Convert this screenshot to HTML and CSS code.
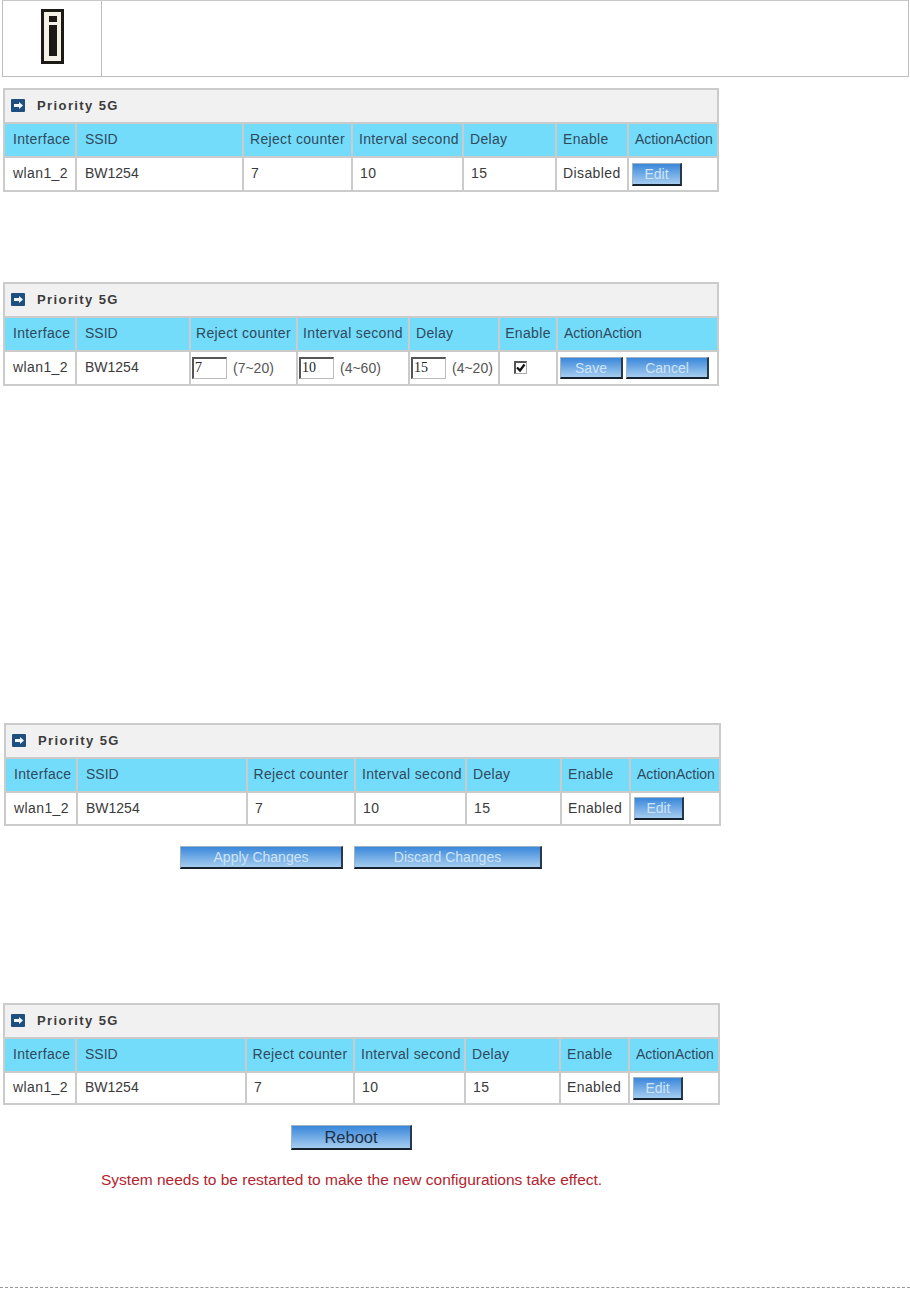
FILE: index.html
```html
<!DOCTYPE html>
<html lang="en">
<head>
<meta charset="utf-8">
<title>Priority 5G</title>
<link rel="stylesheet" href="styles.css">
</head>
<body>
<div class="page">
  <div class="note">
    <div class="note-icon">
      <svg width="23" height="55" viewBox="0 0 23 55"><rect width="23" height="55" fill="#1d1a16"/><rect x="3" y="3" width="17" height="49" fill="#f5f1e6"/><rect x="8" y="7" width="8" height="6" fill="#1d1a16"/><rect x="8" y="16" width="8" height="31" fill="#1d1a16"/></svg>
    </div>
    <div class="note-body"></div>
  </div>

  <section class="panel p1">
    <div class="title"><svg class="ti" width="14" height="13" viewBox="0 0 14 13"><rect width="14" height="13" rx="1" fill="#1f4f7f"/><path d="M3 5h5V3l4 3.500-4 3.500V8H3z" fill="#f4f8fb"/></svg><span>Priority 5G</span></div>
    <div class="grid head">
      <div>Interface</div><div class="tight">SSID</div><div>Reject counter</div><div>Interval second</div><div>Delay</div><div>Enable</div><div class="tight act">ActionAction</div>
    </div>
    <div class="grid row">
      <div>wlan1_2</div><div class="tight">BW1254</div><div>7</div><div>10</div><div>15</div><div class="st">Disabled</div><div class="btncell"><button class="btn edit">Edit</button></div>
    </div>
  </section>

  <section class="panel p2">
    <div class="title"><svg class="ti" width="14" height="13" viewBox="0 0 14 13"><rect width="14" height="13" rx="1" fill="#1f4f7f"/><path d="M3 5h5V3l4 3.500-4 3.500V8H3z" fill="#f4f8fb"/></svg><span>Priority 5G</span></div>
    <div class="grid head">
      <div>Interface</div><div class="tight">SSID</div><div class="ctr">Reject counter</div><div class="ctr">Interval second</div><div>Delay</div><div class="ctr">Enable</div><div class="tight">ActionAction</div>
    </div>
    <div class="grid row">
      <div>wlan1_2</div><div class="tight">BW1254</div>
      <div class="fld"><span class="inp">7</span><span class="rng">(7~20)</span></div>
      <div class="fld"><span class="inp">10</span><span class="rng">(4~60)</span></div>
      <div class="fld"><span class="inp">15</span><span class="rng">(4~20)</span></div>
      <div class="chkcell"><span class="chk"><svg width="10" height="10" viewBox="0 0 10 10"><path d="M1 4.500l3 3 4.500-6" fill="none" stroke="#111" stroke-width="2.200"/></svg></span></div>
      <div class="btncell two"><button class="btn save">Save</button><button class="btn cancel">Cancel</button></div>
    </div>
  </section>

  <section class="panel p3">
    <div class="title"><svg class="ti" width="14" height="13" viewBox="0 0 14 13"><rect width="14" height="13" rx="1" fill="#1f4f7f"/><path d="M3 5h5V3l4 3.500-4 3.500V8H3z" fill="#f4f8fb"/></svg><span>Priority 5G</span></div>
    <div class="grid head">
      <div>Interface</div><div class="tight">SSID</div><div class="ctr">Reject counter</div><div>Interval second</div><div>Delay</div><div>Enable</div><div class="tight act">ActionAction</div>
    </div>
    <div class="grid row">
      <div>wlan1_2</div><div class="tight">BW1254</div><div>7</div><div>10</div><div>15</div><div class="st">Enabled</div><div class="btncell"><button class="btn edit">Edit</button></div>
    </div>
  </section>
  <div class="actions">
    <button class="btn apply">Apply Changes</button><button class="btn discard">Discard Changes</button>
  </div>

  <section class="panel p4">
    <div class="title"><svg class="ti" width="14" height="13" viewBox="0 0 14 13"><rect width="14" height="13" rx="1" fill="#1f4f7f"/><path d="M3 5h5V3l4 3.500-4 3.500V8H3z" fill="#f4f8fb"/></svg><span>Priority 5G</span></div>
    <div class="grid head">
      <div>Interface</div><div class="tight">SSID</div><div class="ctr">Reject counter</div><div>Interval second</div><div>Delay</div><div>Enable</div><div class="tight act">ActionAction</div>
    </div>
    <div class="grid row">
      <div>wlan1_2</div><div class="tight">BW1254</div><div>7</div><div>10</div><div>15</div><div class="st">Enabled</div><div class="btncell"><button class="btn edit">Edit</button></div>
    </div>
  </section>
  <div class="reboot-wrap"><button class="btn reboot">Reboot</button></div>
  <p class="warn">System needs to be restarted to make the new configurations take effect.</p>
  <div class="rule"></div>
</div>
</body>
</html>
```
FILE: styles.css
```css
html, body { margin: 0; padding: 0; background: #fff; }
.page {
  width: 910px;
  height: 1291px;
  overflow: hidden;
  font-family: "Liberation Sans", Arial, sans-serif;
  font-size: 14px;
  color: #3a3a3a;
}
.note {
  display: grid;
  grid-template-columns: 99px 1fr;
  height: 77px;
  margin-left: 2px;
  width: 907px;
  box-sizing: border-box;
  border: 1px solid #bdbdbd;
  border-top-color: #c8c8c8;
}
.note-icon {
  border-right: 1px solid #bdbdbd;
  display: flex;
  justify-content: center;
  align-items: flex-start;
  padding-top: 8px;
}
.panel {
  box-sizing: border-box;
  width: 716px;
  background: #cbcbcb;
  padding: 2px;
  display: flex;
  flex-direction: column;
  gap: 2px;
}
.p1 { margin: 11px 0 0 3px; height: 104px; }
.p2 { margin: 90px 0 0 3px; height: 104px; }
.p3 { margin: 337px 0 0 4px; height: 103px; width: 717px; }
.p4 { margin: 134px 0 0 3px; height: 102px; width: 717px; }
.title {
  height: 32px;
  flex: none;
  box-sizing: border-box;
  background: #f1f1f1;
  display: flex;
  align-items: center;
  padding: 0 0 2px 6px;
  font-size: 13px;
  font-weight: bold;
  letter-spacing: 1.4px;
  color: #3c3c3c;
}
.ti { margin-right: 12px; }
.grid { display: grid; gap: 0 2px; }
.p1 .grid { grid-template-columns: 70px 165px 107px 109px 91px 70px 1fr; }
.p2 .grid { grid-template-columns: 70px 112px 105px 110px 88px 56px 1fr; }
.p3 .grid { grid-template-columns: 70px 168px 106px 109px 93px 67px 1fr; }
.p4 .grid { grid-template-columns: 70px 168px 106px 109px 93px 67px 1fr; }
.head { height: 32px; flex: none; }
.row { flex: 1; min-height: 0; }
.head > div {
  background: #74dcfb;
  display: flex;
  align-items: center;
  box-sizing: border-box;
  padding: 0 0 2px 8px;
  color: #2f4a5c;
  white-space: nowrap;
  overflow: hidden;
  letter-spacing: 0.33px;
}
.row > div {
  background: #fff;
  display: flex;
  align-items: center;
  box-sizing: border-box;
  padding: 0 0 2px 8px;
  white-space: nowrap;
  letter-spacing: 0.4px;
}
.head > div:nth-child(n+3) { padding-left: 6px; }
.row > div:nth-child(n+3) { padding-left: 7px; }
.head > .tight, .row > .tight { letter-spacing: 0; }
.head > .ctr:nth-child(n+3) { justify-content: center; padding-left: 0; }
.row > .st:nth-child(n+3) { padding-left: 6px; }
.row > .btncell:nth-child(n+3) { padding-left: 3px; padding-bottom: 0; letter-spacing: 0; }
.row > .two:nth-child(n+3) { gap: 3px; padding-left: 2px; }
.row > .fld:nth-child(n+3) { padding-left: 1px; padding-bottom: 0; letter-spacing: 0; }
.inp {
  box-sizing: border-box;
  width: 35px;
  height: 22px;
  border: 1px solid #bbb;
  border-top: 2px solid #555;
  border-left: 2px solid #555;
  padding-left: 1px;
  line-height: 18px;
  font-family: "Liberation Serif", serif;
  color: #222;
}
.rng { margin-left: 6px; color: #555; }
.row > .chkcell:nth-child(n+3) { padding-left: 14px; padding-bottom: 1px; }
.chk {
  box-sizing: border-box;
  width: 13px;
  height: 13px;
  border: 1px solid #aaa;
  border-top: 2px solid #555;
  border-left: 2px solid #555;
  display: flex;
  align-items: center;
  justify-content: center;
}
.btn {
  box-sizing: border-box;
  height: 23px;
  padding: 0;
  font-family: "Liberation Sans", Arial, sans-serif;
  font-size: 14px;
  color: #cfe4f7;
  background: linear-gradient(#3a87da, #a5cdf0);
  border: 1px solid #9fb3c4;
  border-right: 2px solid #26394d;
  border-bottom: 2px solid #16222e;
  text-align: center;
}
.edit { width: 50px; }
.save { width: 63px; height: 22px; }
.cancel { width: 83px; height: 22px; }
.actions {
  margin: 20px 0 0 180px;
  display: flex;
  gap: 11px;
}
.apply { width: 163px; }
.discard { width: 188px; }
.reboot-wrap { margin: 20px 0 0 291px; height: 25px; }
.reboot {
  width: 121px;
  height: 25px;
  font-size: 16.500px;
  color: #1e3048;
}
.warn {
  margin: 21px 0 0 101px;
  font-size: 15.500px;
  color: #b3242e;
  line-height: 18px;
}
.rule {
  margin-top: 98px;
  border-top: 1px dashed #999;
  width: 910px;
}
```
